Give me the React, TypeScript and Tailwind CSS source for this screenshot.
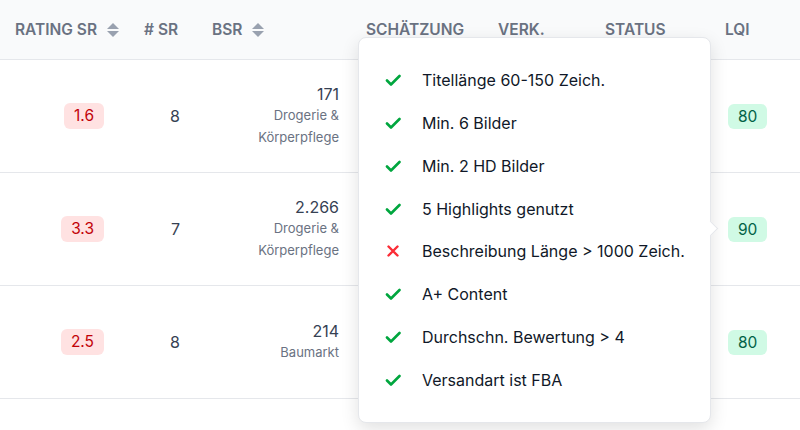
import React from 'react';

/**
 * Listing table with the LQI checklist popover opened over the middle columns.
 */

const COLS = 'grid grid-cols-[128px_68px_154px_132px_107px_120px_1fr]';

const ROWS = [
  { rating: '1.6', sr: '8', bsr: '171', cat: ['Drogerie &', 'Körperpflege'], lqi: '80' },
  { rating: '3.3', sr: '7', bsr: '2.266', cat: ['Drogerie &', 'Körperpflege'], lqi: '90' },
  { rating: '2.5', sr: '8', bsr: '214', cat: ['Baumarkt'], lqi: '80' },
];

const CHECKS: { label: string; ok: boolean }[] = [
  { label: 'Titellänge 60-150 Zeich.', ok: true },
  { label: 'Min. 6 Bilder', ok: true },
  { label: 'Min. 2 HD Bilder', ok: true },
  { label: '5 Highlights genutzt', ok: true },
  { label: 'Beschreibung Länge > 1000 Zeich.', ok: false },
  { label: 'A+ Content', ok: true },
  { label: 'Durchschn. Bewertung > 4', ok: true },
  { label: 'Versandart ist FBA', ok: true },
];

function SortIcon() {
  return (
    <svg width="14" height="16" viewBox="0 0 14 16" className="ml-[9px] text-gray-400">
      <path d="M7 1 L13 7 H1 Z" fill="currentColor" />
      <path d="M7 15 L13 9 H1 Z" fill="currentColor" />
    </svg>
  );
}

function Check() {
  return (
    <svg width="16" height="16" viewBox="0 0 16 16" className="text-green-600">
      <path d="M2 8.5 L6 12.5 L14.5 4" fill="none" stroke="currentColor" strokeWidth="2.6" strokeLinecap="round" strokeLinejoin="round" />
    </svg>
  );
}

function Cross() {
  return (
    <svg width="16" height="16" viewBox="0 0 16 16" className="text-red-500">
      <path d="M3.5 3.5 L12.5 12.5 M12.5 3.5 L3.5 12.5" fill="none" stroke="currentColor" strokeWidth="2.4" strokeLinecap="round" />
    </svg>
  );
}

export default function App() {
  return (
    <div
      className="relative h-[430px] w-[800px] overflow-hidden bg-white"
      style={{ fontFamily: 'Inter, "Noto Sans", sans-serif' }}
    >
      {/* Header */}
      <div className={`${COLS} h-[60px] items-center border-b border-gray-200 bg-gray-50 text-[15.5px] font-semibold uppercase text-gray-500`}>
        <div className="flex items-center pl-[15px]">Rating SR<SortIcon /></div>
        <div className="pl-4"># SR</div>
        <div className="flex items-center pl-4">BSR<SortIcon /></div>
        <div className="pl-4">Schätzung</div>
        <div className="pl-4">Verk.</div>
        <div className="pl-4">Status</div>
        <div className="pl-4">LQI</div>
      </div>

      {/* Rows */}
      {ROWS.map((r) => (
        <div key={r.bsr} className={`${COLS} h-[113px] items-center border-b border-gray-200`}>
          <div className="flex justify-end pr-6">
            <span className="rounded-md bg-red-100 px-[10px] py-[3px] text-[15.5px] leading-5 text-red-700">{r.rating}</span>
          </div>
          <div className="pr-4 text-right text-[16px] text-gray-700">{r.sr}</div>
          <div className="pr-[11px] text-right">
            <div className="text-[16px] leading-[20px] text-gray-700">{r.bsr}</div>
            {r.cat.map((c) => (
              <div key={c} className="text-[13px] leading-[22px] text-gray-500">{c}</div>
            ))}
          </div>
          <div />
          <div />
          <div />
          <div className="pl-[19px]">
            <span className="rounded-md bg-emerald-100 px-[10px] py-[3px] text-[15.5px] leading-5 text-emerald-800">{r.lqi}</span>
          </div>
        </div>
      ))}

      {/* LQI checklist popover */}
      <div className="absolute left-[358px] top-[37px] w-[353px] rounded-lg border border-gray-200 bg-white py-[21px] pl-[26px] shadow-[0_6px_18px_rgba(0,0,0,0.12)]">
        {CHECKS.map((c) => (
          <div key={c.label} className="flex h-[42.75px] items-center gap-[21px] text-[16px] text-gray-900">
            {c.ok ? <Check /> : <Cross />}
            <span>{c.label}</span>
          </div>
        ))}
        <div className="absolute -right-[6px] top-[185px] h-[11px] w-[11px] rotate-45 border-r border-t border-gray-200 bg-white" />
      </div>
    </div>
  );
}
